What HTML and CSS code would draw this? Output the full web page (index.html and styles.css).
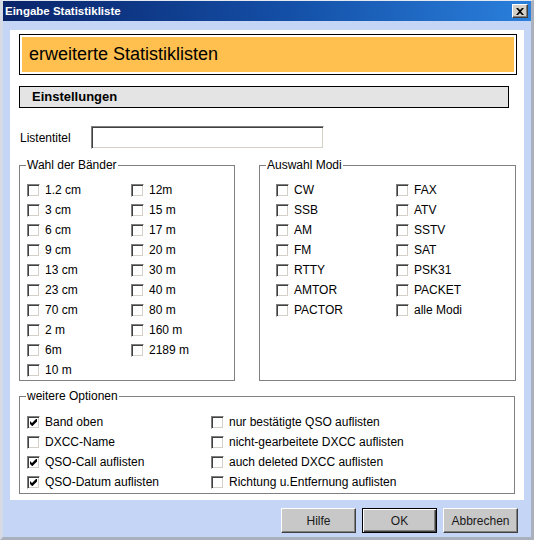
FILE: index.html
```html
<!DOCTYPE html>
<html lang="de">

<head>
    <meta charset="UTF-8">
    <title>Eingabe Statistikliste</title>
    <link rel="stylesheet" href="styles.css">
</head>

<body>

    <div class="window">
        <div class="titlebar">
            <span class="title">Eingabe Statistikliste</span>
            <span class="close">
                <svg width="8" height="7" viewBox="0 0 8 7"><path d="M0 0h2l2 2 2-2h2L5 3.5 8 7H6L4 5 2 7H0l3-3.5z" fill="#000"/></svg>
            </span>
        </div>

        <div class="client">
            <div class="panel">
                <div class="banner">
                    <div class="banner-fill">erweiterte Statistiklisten</div>
                </div>

                <div class="section">Einstellungen</div>

                <div class="title-row">
                    <label class="title-label" for="listentitel">Listentitel</label>
                    <input class="textfield" id="listentitel" type="text">
                </div>

                <div class="groups">
                    <!-- Bänder -->
                    <fieldset class="group bands">
                        <legend>Wahl der Bänder</legend>
                        <div class="checks">
                            <label class="check"><span class="box"></span>1.2 cm</label>
                            <label class="check"><span class="box"></span>3 cm</label>
                            <label class="check"><span class="box"></span>6 cm</label>
                            <label class="check"><span class="box"></span>9 cm</label>
                            <label class="check"><span class="box"></span>13 cm</label>
                            <label class="check"><span class="box"></span>23 cm</label>
                            <label class="check"><span class="box"></span>70 cm</label>
                            <label class="check"><span class="box"></span>2 m</label>
                            <label class="check"><span class="box"></span>6m</label>
                            <label class="check"><span class="box"></span>10 m</label>
                            <label class="check"><span class="box"></span>12m</label>
                            <label class="check"><span class="box"></span>15 m</label>
                            <label class="check"><span class="box"></span>17 m</label>
                            <label class="check"><span class="box"></span>20 m</label>
                            <label class="check"><span class="box"></span>30 m</label>
                            <label class="check"><span class="box"></span>40 m</label>
                            <label class="check"><span class="box"></span>80 m</label>
                            <label class="check"><span class="box"></span>160 m</label>
                            <label class="check"><span class="box"></span>2189 m</label>
                        </div>
                    </fieldset>

                    <!-- Modi -->
                    <fieldset class="group modes">
                        <legend>Auswahl Modi</legend>
                        <div class="checks">
                            <label class="check"><span class="box"></span>CW</label>
                            <label class="check"><span class="box"></span>SSB</label>
                            <label class="check"><span class="box"></span>AM</label>
                            <label class="check"><span class="box"></span>FM</label>
                            <label class="check"><span class="box"></span>RTTY</label>
                            <label class="check"><span class="box"></span>AMTOR</label>
                            <label class="check"><span class="box"></span>PACTOR</label>
                            <label class="check"><span class="box"></span>FAX</label>
                            <label class="check"><span class="box"></span>ATV</label>
                            <label class="check"><span class="box"></span>SSTV</label>
                            <label class="check"><span class="box"></span>SAT</label>
                            <label class="check"><span class="box"></span>PSK31</label>
                            <label class="check"><span class="box"></span>PACKET</label>
                            <label class="check"><span class="box"></span>alle Modi</label>
                        </div>
                    </fieldset>
                </div>

                <!-- weitere Optionen -->
                <fieldset class="group options">
                    <legend>weitere Optionen</legend>
                    <div class="checks">
                        <label class="check"><span class="box"><svg viewBox="0 0 13 13"><polygon points="3,5 5,7 9,3 10,3 10,5.5 5.5,10 5,10 3,8" fill="#000"/></svg></span>Band oben</label>
                        <label class="check"><span class="box"></span>DXCC-Name</label>
                        <label class="check"><span class="box"><svg viewBox="0 0 13 13"><polygon points="3,5 5,7 9,3 10,3 10,5.5 5.5,10 5,10 3,8" fill="#000"/></svg></span>QSO-Call auflisten</label>
                        <label class="check"><span class="box"><svg viewBox="0 0 13 13"><polygon points="3,5 5,7 9,3 10,3 10,5.5 5.5,10 5,10 3,8" fill="#000"/></svg></span>QSO-Datum auflisten</label>
                        <label class="check"><span class="box"></span>nur bestätigte QSO auflisten</label>
                        <label class="check"><span class="box"></span>nicht-gearbeitete DXCC auflisten</label>
                        <label class="check"><span class="box"></span>auch deleted DXCC auflisten</label>
                        <label class="check"><span class="box"></span>Richtung u.Entfernung auflisten</label>
                    </div>
                </fieldset>
            </div>

            <div class="actions">
                <button class="btn">Hilfe</button>
                <button class="btn default">OK</button>
                <button class="btn">Abbrechen</button>
            </div>
        </div>
    </div>

</body>

</html>
```

FILE: styles.css
```css
/* Styles généraux */
* {
    margin: 0;
    padding: 0;
    box-sizing: border-box;
}

body {
    width: 534px;
    height: 540px;
    overflow: hidden;
    font-family: "Liberation Sans", Arial, sans-serif;
    font-size: 12px;
    color: #000;
    background-color: #c5d5f5;
}

/* Fenster */
.window {
    width: 534px;
    height: 540px;
    border-style: solid;
    border-width: 1px 3px 3px 3px;
    border-color: #e4e8f0 #aab0bc #aab0bc #d6dae4;
    background-color: #c5d5f5;
}

.titlebar {
    display: flex;
    align-items: center;
    justify-content: space-between;
    height: 20px;
    padding: 0 3px 0 2px;
    background: linear-gradient(to right, #0a246a 0%, #1450a8 55%, #2a80dc 100%);
}

.title {
    color: #fff;
    font-weight: bold;
    font-size: 11.5px;
}

.close {
    display: flex;
    align-items: center;
    justify-content: center;
    width: 16px;
    height: 14px;
    background-color: #d4d0c8;
    border: 1px solid;
    border-color: #fff #404040 #404040 #fff;
    box-shadow: inset -1px -1px 0 #808080;
}

.client {
    padding: 9px 7px 0 7px;
}

/* weißer Bereich */
.panel {
    height: 470px;
    padding-top: 4px;
    background-color: #fff;
}

.banner {
    margin: 0 7px 0 9px;
    border: 1px solid #000;
    padding: 2px;
}

.banner-fill {
    height: 35px;
    line-height: 35px;
    padding-left: 7px;
    font-size: 18px;
    background-color: #ffc04f;
}

.section {
    margin: 11px 15px 0 9px;
    height: 22px;
    line-height: 20px;
    padding-left: 12px;
    border: 1px solid #000;
    background-color: #e4e4e4;
    font-weight: bold;
    font-size: 13px;
}

.title-row {
    display: flex;
    align-items: center;
    margin-top: 18px;
    padding-left: 10px;
}

.title-label {
    width: 71px;
}

.textfield {
    width: 233px;
    height: 23px;
    border: 1px solid;
    border-color: #808080 #fff #fff #808080;
    box-shadow: inset 1px 1px 0 #404040, inset -1px -1px 0 #d4d0c8;
    background-color: #fff;
    outline: none;
}

/* Gruppen */
.groups {
    display: flex;
    gap: 24px;
    margin-top: 9px;
    padding-left: 9px;
}

.group {
    border: 1px solid #808080;
    padding: 8px 0 0 0;
    min-inline-size: 0;
}

.group legend {
    margin-left: 6px;
    padding: 0 1px;
    line-height: 14px;
}

.checks {
    display: grid;
    grid-auto-flow: column;
    grid-auto-rows: 20px;
}

.bands {
    width: 216px;
}

.bands .checks {
    grid-template-rows: repeat(10, 20px);
    grid-template-columns: 104px auto;
    padding-left: 7px;
}

.modes {
    width: 257px;
}

.modes .checks {
    grid-template-rows: repeat(7, 20px);
    grid-template-columns: 120px auto;
    padding-left: 16px;
}

.options {
    margin: 8px 9px 0 9px;
    padding: 9px 0 1px 0;
}

.options .checks {
    grid-template-rows: repeat(4, 20px);
    grid-template-columns: 184px auto;
    padding-left: 7px;
}

.check {
    display: flex;
    align-items: center;
    gap: 5px;
    white-space: nowrap;
}

.box {
    position: relative;
    flex: none;
    width: 13px;
    height: 13px;
    border: 1px solid;
    border-color: #808080 #fff #fff #808080;
    box-shadow: inset 1px 1px 0 #404040, inset -1px -1px 0 #d4d0c8;
    background-color: #fff;
}

.box svg {
    position: absolute;
    top: -1px;
    left: -1px;
    width: 13px;
    height: 13px;
}

/* Knöpfe */
.actions {
    display: flex;
    justify-content: flex-end;
    gap: 6px;
    margin-top: 8px;
    padding-right: 6px;
}

.btn {
    width: 75px;
    height: 25px;
    font-family: "Liberation Sans", Arial, sans-serif;
    font-size: 12px;
    color: #1a1a1a;
    background-color: #c8c8c8;
    border: 1px solid;
    border-color: #fff #404040 #404040 #fff;
    box-shadow: inset -1px -1px 0 #808080;
}

.btn.default {
    border-color: #000;
    box-shadow: inset 1px 1px 0 #fff, inset -1px -1px 0 #404040, inset -2px -2px 0 #808080;
}
```
